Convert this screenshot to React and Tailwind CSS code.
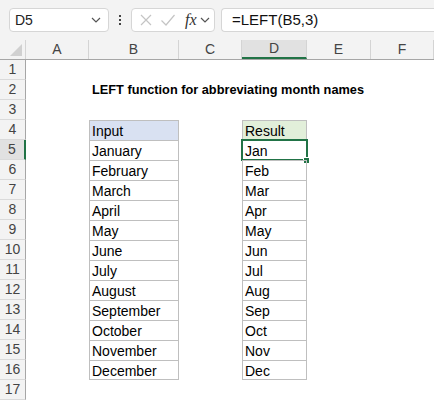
import React from "react";

const cols = [
  { name: "A", w: "w-[63px]" },
  { name: "B", w: "w-[90px]" },
  { name: "C", w: "w-[63px]" },
  { name: "D", w: "w-[65px]" },
  { name: "E", w: "w-[64px]" },
  { name: "F", w: "w-[63px]" },
];

const months = [
  "January",
  "February",
  "March",
  "April",
  "May",
  "June",
  "July",
  "August",
  "September",
  "October",
  "November",
  "December",
];

function Chevron() {
  return (
    <svg width="10" height="6" viewBox="0 0 10 6" fill="none">
      <path d="M1 1l4 4 4-4" stroke="#555" strokeWidth="1.2" />
    </svg>
  );
}

function Cell({ col, row }) {
  let text = null;
  let cls = "";
  let selected = false;

  if (col === "B" && row >= 4 && row <= 16) {
    text = row === 4 ? "Input" : months[row - 5];
    cls = "border-l border-r border-t border-[#bfbfbf]";
    if (row === 4) cls += " bg-[#d9e1f2]";
    if (row === 16) cls += " border-b";
  }
  if (col === "D" && row >= 4 && row <= 16) {
    text = row === 4 ? "Result" : months[row - 5].slice(0, 3);
    cls = "border-l border-r border-t border-[#bfbfbf]";
    if (row === 4) cls += " bg-[#e2efda]";
    if (row === 16) cls += " border-b";
    if (row === 5) selected = true;
  }

  const w = cols.find((c) => c.name === col).w;

  if (col === "B" && row === 2) {
    return (
      <div className={`${w} h-[20px] relative`}>
        <span className="absolute left-[3px] top-0 whitespace-nowrap text-[12.75px] leading-[20px] font-bold text-black">
          LEFT function for abbreviating month names
        </span>
      </div>
    );
  }

  return (
    <div className={`${w} h-[20px] relative ${cls}`}>
      {text && (
        <span className="absolute left-[2px] top-0 text-[14px] leading-[20px] text-black whitespace-nowrap">
          {text}
        </span>
      )}
      {selected && (
        <>
          <div className="absolute -left-[2px] -top-[2px] -right-[2px] -bottom-[1px] border-2 border-[#217346]" />
          <div className="absolute -right-[4px] -bottom-[4px] w-[7px] h-[7px] bg-[#217346] border border-white" />
        </>
      )}
    </div>
  );
}

export default function App() {
  const rows = Array.from({ length: 17 }, (_, i) => i + 1);

  return (
    <div className="w-[434px] h-[400px] overflow-hidden bg-white font-['Liberation_Sans',Arial,sans-serif]">
      {/* Formula bar */}
      <div className="h-[40px] bg-[#f3f3f3] flex items-center">
        <div className="ml-[9px] w-[100px] h-[24px] bg-white border border-[#d6d6d6] rounded-[4px] flex items-center justify-between pl-[5px] pr-[7px]">
          <span className="text-[14px] text-[#222]">D5</span>
          <Chevron />
        </div>
        <div className="w-[22px] flex flex-col items-center gap-[2px]">
          <div className="w-[2px] h-[2px] bg-[#444]" />
          <div className="w-[2px] h-[2px] bg-[#444]" />
          <div className="w-[2px] h-[2px] bg-[#444]" />
        </div>
        <div className="w-[84px] h-[24px] bg-white border border-[#d6d6d6] rounded-[4px] flex items-center pl-[7px] gap-[7px]">
          <svg width="14" height="14" viewBox="0 0 14 14" fill="none">
            <path d="M2 2l10 10M12 2L2 12" stroke="#c4c4c4" strokeWidth="1.2" />
          </svg>
          <svg width="16" height="14" viewBox="0 0 16 14" fill="none">
            <path d="M1.5 7.5l4.5 4.5L14.5 2" stroke="#c4c4c4" strokeWidth="1.2" />
          </svg>
          <span className="font-['Liberation_Serif',serif] italic text-[16px] text-[#333] leading-none ml-[2px]">
            fx
          </span>
          <div className="-ml-[4px]">
            <Chevron />
          </div>
        </div>
        <div className="ml-[6px] flex-1 h-[24px] bg-white border border-r-0 border-[#d6d6d6] rounded-l-[4px] flex items-center pl-[10px]">
          <span className="text-[15px] text-[#111]">=LEFT(B5,3)</span>
        </div>
      </div>

      {/* Column headers */}
      <div className="flex h-[20px] bg-[#f3f3f3] border-b border-[#a6a6a6]">
        <div className="w-[26px] h-full border-r border-[#d4d4d4] relative">
          <svg className="absolute right-[3px] bottom-[3px]" width="12" height="12" viewBox="0 0 12 12">
            <path d="M12 0V12H0Z" fill="#d0d0d0" />
          </svg>
        </div>
        {cols.map((c) => (
          <div
            key={c.name}
            className={`${c.w} h-full flex items-center justify-center text-[14px] text-[#444] border-r border-[#d4d4d4] ${
              c.name === "D" ? "bg-[#e1e1e1] border-b-2 border-b-[#217346]" : ""
            }`}
          >
            {c.name}
          </div>
        ))}
      </div>

      {/* Rows */}
      {rows.map((r) => (
        <div key={r} className="flex h-[20px]">
          <div
            className={`w-[26px] h-[20px] flex items-center justify-center text-[14px] text-[#444] border-b border-[#dadada] ${
              r === 5 ? "bg-[#e1e1e1] border-r-2 border-r-[#217346]" : "bg-[#f3f3f3] border-r border-r-[#a6a6a6]"
            }`}
          >
            {r}
          </div>
          {cols.map((c) => (
            <Cell key={c.name} col={c.name} row={r} />
          ))}
        </div>
      ))}
    </div>
  );
}
